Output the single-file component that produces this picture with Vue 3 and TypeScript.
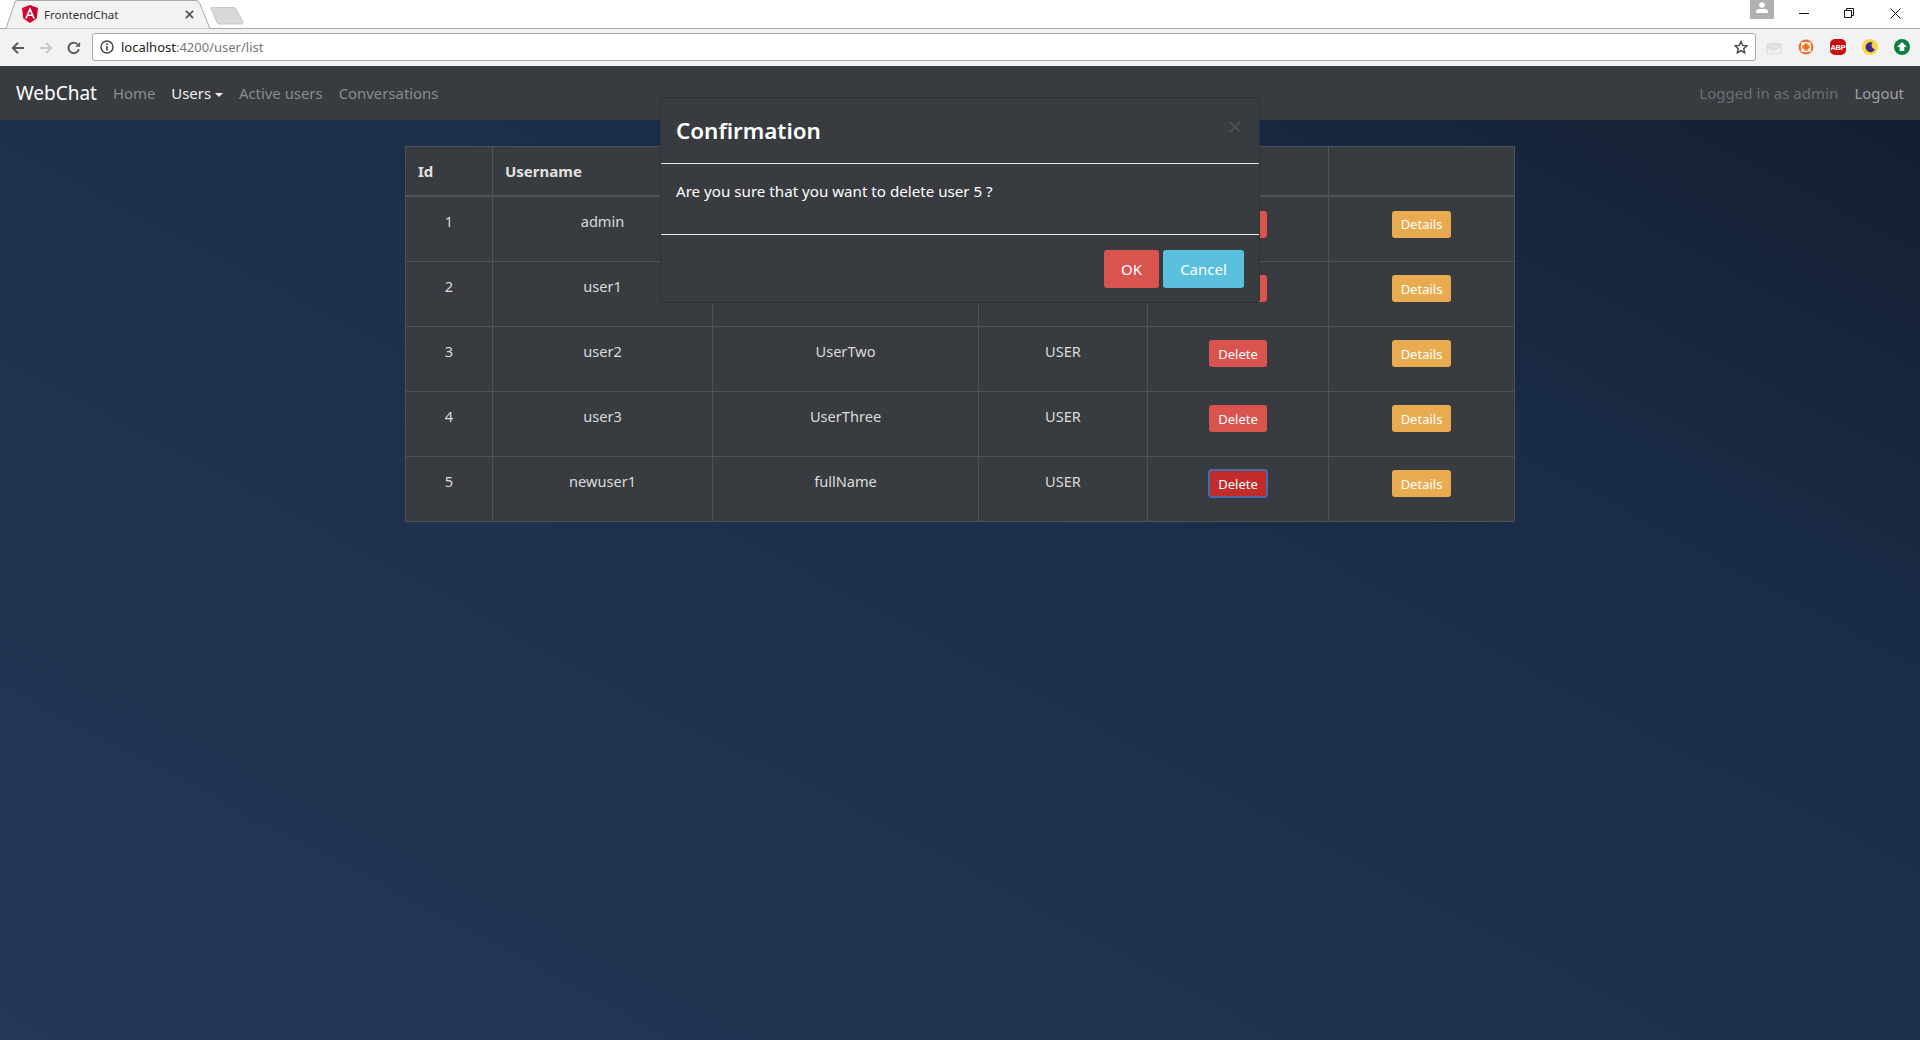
<script setup lang="ts">
interface Row { id: number; username: string; fullName: string; role: string; active?: boolean }
const rows: Row[] = [
  { id: 1, username: 'admin', fullName: 'Administrator', role: 'ADMIN' },
  { id: 2, username: 'user1', fullName: 'UserOne', role: 'USER' },
  { id: 3, username: 'user2', fullName: 'UserTwo', role: 'USER' },
  { id: 4, username: 'user3', fullName: 'UserThree', role: 'USER' },
  { id: 5, username: 'newuser1', fullName: 'fullName', role: 'USER', active: true },
]
</script>

<template>
  <div class="page">
    <div class="strip">
      <div class="tab">
        <svg class="tab-shape" width="212" height="29" viewBox="0 0 212 29">
          <path d="M0 28.500H6L15 2Q15.500 .5 18 .5H196Q198.500 .5 199.500 3L210 28.500H212" fill="#f2f2f2" stroke="#a8a8a8" />
        </svg>
        <svg class="ng" width="16" height="18" viewBox="0 0 16 18">
          <path d="M8 0L0 2.900L1.300 13.400L8 18Z" fill="#dd0031" />
          <path d="M8 0L16 2.900L14.700 13.400L8 18Z" fill="#c3002f" />
          <path d="M8 2L3 13.500H4.900L5.900 11H10.100L11.100 13.500H13L8 2ZM8 6.200L9.400 9.500H6.600Z" fill="#fff" />
        </svg>
        <span class="tab-title">FrontendChat</span>
        <svg class="tab-x" width="9" height="9" viewBox="0 0 10 10"><path d="M1 1L9 9M9 1L1 9" stroke="#555" stroke-width="1.900" /></svg>
      </div>
      <svg class="newtab" width="36" height="20" viewBox="0 0 36 20"><path d="M1 1.500Q1 .5 2 .5H24Q25.500 .5 26 2L33 15Q33.500 17 32 17H9Q7.500 17 7 15.500Z" fill="#d8d8d8" stroke="#c8c8c8" /></svg>
      <div class="win">
        <div class="avatar"><svg width="12" height="11" viewBox="0 0 12 11"><circle cx="6" cy="3" r="2.800" fill="#fff" /><path d="M0 11V9.500Q0 7.500 3 7H9Q12 7.500 12 9.500V11Z" fill="#fff" /></svg></div>
        <svg class="w-min" width="10" height="10" viewBox="0 0 10 10"><path d="M0 5.500H10" stroke="#111" /></svg>
        <svg class="w-res" width="10" height="10" viewBox="0 0 10 10"><path d="M.5 2.500H7.500V9.500H.5ZM2.500 2.500V.5H9.500V7.500H7.500" fill="none" stroke="#111" /></svg>
        <svg class="w-x" width="11" height="11" viewBox="0 0 11 11"><path d="M.5 .5L10.500 10.500M10.500 .5L.5 10.500" stroke="#111" /></svg>
      </div>
    </div>

    <div class="toolbar">
      <svg class="tb" width="14" height="14" viewBox="0 0 16 16"><path d="M15 8H2.500M8 2L2 8L8 14" fill="none" stroke="#5a5a5a" stroke-width="2.200" /></svg>
      <svg class="tb" width="14" height="14" viewBox="0 0 16 16"><path d="M1 8H13.500M8 2L14 8L8 14" fill="none" stroke="#c9c9c9" stroke-width="2.200" /></svg>
      <svg class="tb" width="14" height="14" viewBox="0 0 16 16"><path d="M13.500 9.500A6 6 0 1 1 12 3.700" fill="none" stroke="#5a5a5a" stroke-width="2.200" /><path d="M9.500 6.500H15V1Z" fill="#5a5a5a" /></svg>
      <div class="omni">
        <svg class="info" width="14" height="14" viewBox="0 0 14 14"><circle cx="7" cy="7" r="6" fill="none" stroke="#444" stroke-width="1.400" /><path d="M7 6V10.500M7 3.300V5" stroke="#444" stroke-width="1.600" /></svg>
        <span class="url"><span class="host">localhost</span>:4200/user/list</span>
        <svg class="star" width="14" height="14" viewBox="0 0 24 24"><path d="M12 2.500L14.900 9.300L22.300 9.900L16.700 14.800L18.400 22L12 18.200L5.600 22L7.300 14.800L1.700 9.900L9.100 9.300Z" fill="none" stroke="#444" stroke-width="2.400" /></svg>
      </div>
      <div class="exts">
        <svg width="16" height="15" viewBox="0 0 18 16"><path d="M1 4H17V15H1Z" fill="#efefef" stroke="#d6d6d6" /><path d="M1 7L9 3L17 7L9 11Z" fill="#e3e3e3" stroke="#d4d4d4" /></svg>
        <svg width="16" height="16" viewBox="0 0 16 16"><circle cx="8" cy="8" r="7.500" fill="#f26f21" /><circle cx="8" cy="8" r="4.500" fill="none" stroke="#fff" stroke-width="1.500" /><path d="M3.500 3.500L6 6M12.500 3.500L10 6M3.500 12.500L6 10M12.500 12.500L10 10" stroke="#fff" stroke-width="2" /></svg>
        <span class="abp">ABP</span>
        <svg width="16" height="16" viewBox="0 0 16 16"><circle cx="8" cy="8" r="8" fill="#f7d63e" /><path d="M10.500 3.500A5 5 0 1 0 13 10.500A4.500 4.500 0 0 1 10.500 3.500Z" fill="#3d2c8d" /></svg>
        <svg width="16" height="16" viewBox="0 0 16 16"><circle cx="8" cy="8" r="8" fill="#0a8043" /><path d="M8 3L13 8H10.300V12H5.700V8H3Z" fill="#fff" /></svg>
      </div>
    </div>

    <nav class="navbar">
      <a class="brand">WebChat</a>
      <a class="nav-link">Home</a>
      <a class="nav-link on">Users <i class="caret"></i></a>
      <a class="nav-link">Active users</a>
      <a class="nav-link">Conversations</a>
      <span class="spacer"></span>
      <span class="nav-text">Logged in as admin</span>
      <a class="nav-link logout">Logout</a>
    </nav>

    <main class="content">
      <table class="users">
        <colgroup>
          <col class="c1" /><col class="c2" /><col class="c3" />
          <col class="c4" /><col class="c5" /><col class="c6" />
        </colgroup>
        <thead>
          <tr><th>Id</th><th>Username</th><th>Full name</th><th>Role</th><th></th><th></th></tr>
        </thead>
        <tbody>
          <tr v-for="r in rows" :key="r.id">
            <td>{{ r.id }}</td>
            <td>{{ r.username }}</td>
            <td>{{ r.fullName }}</td>
            <td>{{ r.role }}</td>
            <td class="act"><button class="btn del" :class="{ focus: r.active }">Delete</button></td>
            <td class="act"><button class="btn det">Details</button></td>
          </tr>
        </tbody>
      </table>
    </main>

    <section class="modal">
      <header class="m-head">
        <h4>Confirmation</h4>
        <svg class="m-x" width="12" height="12" viewBox="0 0 12 12"><path d="M1 1L11 11M11 1L1 11" stroke="#4c4f53" stroke-width="1.800" /></svg>
      </header>
      <div class="m-body">Are you sure that you want to delete user 5 ?</div>
      <footer class="m-foot">
        <button class="mbtn ok">OK</button>
        <button class="mbtn cancel">Cancel</button>
      </footer>
    </section>
  </div>
</template>

<style>
html, body { margin: 0; background: #1c2f4a; }
</style>

<style scoped>
.page {
  position: relative;
  width: 1920px;
  height: 1040px;
  overflow: hidden;
  display: flex;
  flex-direction: column;
  font-family: "Noto Sans", "Open Sans", sans-serif;
  background: linear-gradient(208deg, #121b2d 0%, #1a2b45 30%, #1f334e 65%, #223855 100%);
}
.strip { height: 29px; flex: none; display: flex; background: #fff; position: relative; box-sizing: border-box; box-shadow: inset 0 -1px 0 #a8a8a8; }
.tab { position: relative; width: 210px; height: 29px; flex: none; display: flex; align-items: center; }
.tab-shape { position: absolute; left: 0; top: 0; }
.ng { position: relative; margin-left: 22px; margin-top: -1px; }
.tab-title { position: relative; margin-left: 6px; font-size: 11.500px; color: #333; width: 141px; margin-top: -1px; }
.tab-x { position: relative; margin-top: -1px; }
.newtab { margin-top: 7px; flex: none; }
.win { margin-left: auto; display: flex; align-items: flex-start; height: 29px; padding-right: 19px; }
.avatar { width: 24px; height: 19px; background: #b0b0b0; display: flex; justify-content: center; padding-top: 2px; box-sizing: border-box; margin-right: 25px; }
.w-min { margin-top: 8px; margin-right: 35px; }
.w-res { margin-top: 8px; margin-right: 36px; }
.w-x { margin-top: 8px; }

.toolbar { height: 37px; flex: none; background: #f2f2f2; display: flex; align-items: center; box-sizing: border-box; padding-left: 11px; gap: 14px; }
.tb { flex: none; }
.omni { margin-left: -3px; width: 1664px; height: 28px; flex: none; box-sizing: border-box; background: #fff; border: 1px solid #a9a9a9; border-radius: 3px; display: flex; align-items: center; padding-left: 7px; margin-top: -1px; }
.url { margin-left: 7px; font-size: 13px; color: #777; flex: 1; }
.host { color: #222; }
.star { margin-right: 7px; }
.exts { display: flex; align-items: center; margin-left: -4px; gap: 16px; margin-top: -1px; }
.abp { width: 16px; height: 16px; border-radius: 5px; background: #c70d0d; color: #fff; font: 700 7.500px "Liberation Sans", sans-serif; display: flex; align-items: center; justify-content: center; letter-spacing: -.2px; }

.navbar { height: 54px; flex: none; background: #383b3f; display: flex; align-items: center; box-sizing: border-box; padding: 0 16px; color: #fff; font-size: 14.900px; }
.brand { font-size: 19px; color: #fff; margin-right: 16px; }
.nav-link { color: #8b8d90; margin-right: 16px; white-space: nowrap; }
.nav-link.on { color: #f0f0f0; }
.logout { color: #a0a2a4; margin-right: 0; margin-left: 16px; }
.nav-text { color: #6a7077; font-size: 15.100px; }
.spacer { flex: 1; }
.caret { display: inline-block; width: 0; height: 0; border-left: 4px solid transparent; border-right: 4px solid transparent; border-top: 4px solid currentColor; vertical-align: middle; margin-left: 0; }

.content { padding: 26px 0 0 405px; }
.users { border-collapse: collapse; table-layout: fixed; width: 1109px; background: #383b3f; color: #dcdcdc; font-size: 14.600px; }
.c1 { width: 87px; }
.c2 { width: 220px; }
.c3 { width: 266px; }
.c4 { width: 169px; }
.c5 { width: 181px; }
.c6 { width: 186px; }
.users th, .users td { border: 1px solid #4e5155; box-sizing: border-box; }
.users th { height: 49px; text-align: left; padding: 0 13px 0 12px; font-size: 15px; font-weight: 700; color: #e2e2e2; border-bottom-width: 2px; }
.users td { height: 65px; text-align: center; vertical-align: top; padding: 14px 8px 0; }
.users tbody tr:first-child td { height: 66px; }
.users td.act { padding-top: 13px; }
.users tbody tr:first-child td.act { padding-top: 14px; }
.btn { display: block; margin: 0 auto; height: 27px; padding: 0 9px; border: 0; border-radius: 3px; color: #fff; font: 13px "Noto Sans", sans-serif; }
.del { background: #d9534f; }
.det { background: #e9ab50; }
.del.focus { background: #c12b2b; outline: 2px solid #4a6aa8; outline-offset: -1px; }

.modal { position: absolute; left: 660px; top: 97px; width: 600px; height: 206px; box-sizing: border-box; background: #383b3f; border: 1px solid #2e3135; border-radius: 4px; display: flex; flex-direction: column; color: #fff; }
.m-head { height: 66px; flex: none; box-sizing: border-box; border-bottom: 1px solid #e8e8e8; padding: 0 15px; display: flex; align-items: center; justify-content: space-between; }
.m-head h4 { margin: 0; font-size: 22.400px; font-weight: 600; }
.m-x { margin-top: -8px; margin-right: 3px; }
.m-body { height: 71px; flex: none; box-sizing: border-box; border-bottom: 1px solid #e8e8e8; padding: 17px 15px 0; font-size: 15.150px; }
.m-foot { flex: 1; display: flex; justify-content: flex-end; gap: 4px; padding: 15px 15px 0 0; box-sizing: border-box; }
.mbtn { height: 38px; border: 0; border-radius: 3px; color: #fff; font: 15px "Noto Sans", sans-serif; padding: 0; }
.ok { width: 55px; background: #d9534f; }
.cancel { width: 81px; background: #5bc0de; }
</style>
